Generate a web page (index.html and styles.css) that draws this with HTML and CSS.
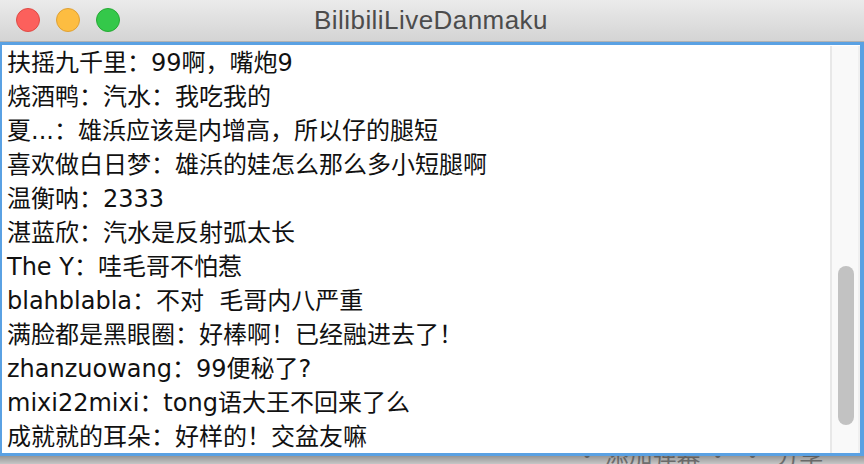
FILE: index.html
```html
<!DOCTYPE html>
<html lang="zh">
<head>
<meta charset="utf-8">
<title>BilibiliLiveDanmaku</title>
<link rel="stylesheet" href="styles.css">
</head>
<body>
<div class="window">
  <header class="titlebar">
    <div class="lights">
      <span class="light red"></span>
      <span class="light yellow"></span>
      <span class="light green"></span>
    </div>
    <div class="title">BilibiliLiveDanmaku</div>
  </header>
  <main class="pane">
    <div class="log">
      <div class="line">扶摇九千里：99啊，嘴炮9</div>
      <div class="line">烧酒鸭：汽水：我吃我的</div>
      <div class="line">夏...：雄浜应该是内增高，所以仔的腿短</div>
      <div class="line">喜欢做白日梦：雄浜的娃怎么那么多小短腿啊</div>
      <div class="line">温衡呐：2333</div>
      <div class="line">湛蓝欣：汽水是反射弧太长</div>
      <div class="line">The Y：哇毛哥不怕惹</div>
      <div class="line">blahblabla：不对  毛哥内八严重</div>
      <div class="line">满脸都是黑眼圈：好棒啊！已经融进去了！</div>
      <div class="line">zhanzuowang：99便秘了?</div>
      <div class="line">mixi22mixi：tong语大王不回来了么</div>
      <div class="line">成就就的耳朵：好样的！交盆友嘛</div>
    </div>
    <div class="track"><div class="thumb"></div></div>
  </main>
  <footer class="below"><span class="ghost">· 添加弹幕 ·  ·  分享</span></footer>
</div>
</body>
</html>
```
FILE: styles.css
```css
html, body {
  margin: 0;
  padding: 0;
  background: #c4c4c4;
}
.window {
  width: 864px;
  height: 464px;
  display: flex;
  flex-direction: column;
  overflow: hidden;
}
.titlebar {
  height: 41px;
  border-bottom: 1px solid #b2b2b2;
  background: linear-gradient(#ebebeb, #d4d4d4);
  display: flex;
  align-items: center;
  flex: none;
}
.lights {
  display: flex;
  gap: 16px;
  padding-left: 16px;
  margin-top: -1px;
}
.light {
  width: 22px;
  height: 22px;
  border-radius: 50%;
  border: 1px solid;
}
.red { background: #fc605c; border-color: #df4b45; }
.yellow { background: #fdbd41; border-color: #dfa135; }
.green { background: #34c84a; border-color: #26aa34; }
.title {
  flex: 1;
  text-align: center;
  margin-left: -122px;
  font-family: "Liberation Sans", Arial, sans-serif;
  font-size: 26px;
  letter-spacing: 0.45px;
  color: #4c4c4c;
  margin-top: -1px;
}
.pane {
  height: 408px;
  border: 3px solid #5aa1e3;
  border-left-width: 2px;
  border-right-width: 4px;
  background: #fff;
  display: flex;
  flex: none;
}
.log {
  flex: 1;
  padding: 1px 0 0 5px;
  font-family: "DejaVu Sans", "Noto Sans CJK SC", sans-serif;
  font-size: 24px;
  color: #111;
  overflow: hidden;
}
.line {
  height: 34px;
  line-height: 34px;
  white-space: pre;
}
.track {
  width: 26px;
  border-left: 2px solid #e8e8e8;
  border-right: 2px solid #f0f0f0;
  background: #f9f9f9;
  display: flex;
  flex-direction: column;
  align-items: flex-start;
  margin-top: 1px;
}
.thumb {
  width: 16px;
  height: 159px;
  margin-top: 220px;
  margin-left: 6px;
  border-radius: 8px;
  background: #c2c2c2;
}
.below {
  flex: 1;
  background: linear-gradient(#969696, #c6c6c6);
  overflow: hidden;
}
.ghost {
  display: block;
  margin: -16px 0 0 575px;
  font-family: "Noto Sans CJK SC", sans-serif;
  font-size: 24px;
  line-height: 28px;
  color: #3a3a3a;
  opacity: 0.6;
  white-space: pre;
}
```
